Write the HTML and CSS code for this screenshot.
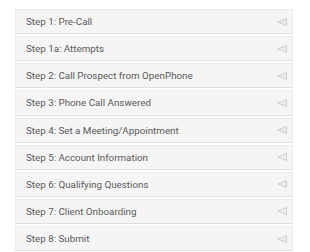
FILE: index.html
```html
<!DOCTYPE html>
<html>
<head>
<meta charset="utf-8">
<link rel="stylesheet" href="styles.css">
</head>
<body>
<div class="steps">
  <div class="step"><span class="label">Step 1: Pre-Call</span><svg class="arrow" viewBox="0 0 10 8"><path d="M9.5 0.5 L0.8 4 L9.5 7.5 Z"/></svg></div>
  <div class="step"><span class="label">Step 1a: Attempts</span><svg class="arrow" viewBox="0 0 10 8"><path d="M9.5 0.5 L0.8 4 L9.5 7.5 Z"/></svg></div>
  <div class="step"><span class="label">Step 2: Call Prospect from OpenPhone</span><svg class="arrow" viewBox="0 0 10 8"><path d="M9.5 0.5 L0.8 4 L9.5 7.5 Z"/></svg></div>
  <div class="step"><span class="label">Step 3: Phone Call Answered</span><svg class="arrow" viewBox="0 0 10 8"><path d="M9.5 0.5 L0.8 4 L9.5 7.5 Z"/></svg></div>
  <div class="step"><span class="label">Step 4: Set a Meeting/Appointment</span><svg class="arrow" viewBox="0 0 10 8"><path d="M9.5 0.5 L0.8 4 L9.5 7.5 Z"/></svg></div>
  <div class="step"><span class="label">Step 5: Account Information</span><svg class="arrow" viewBox="0 0 10 8"><path d="M9.5 0.5 L0.8 4 L9.5 7.5 Z"/></svg></div>
  <div class="step"><span class="label">Step 6: Qualifying Questions</span><svg class="arrow" viewBox="0 0 10 8"><path d="M9.5 0.5 L0.8 4 L9.5 7.5 Z"/></svg></div>
  <div class="step"><span class="label">Step 7: Client Onboarding</span><svg class="arrow" viewBox="0 0 10 8"><path d="M9.5 0.5 L0.8 4 L9.5 7.5 Z"/></svg></div>
  <div class="step"><span class="label">Step 8: Submit</span><svg class="arrow" viewBox="0 0 10 8"><path d="M9.5 0.5 L0.8 4 L9.5 7.5 Z"/></svg></div>
</div>
</body>
</html>
```
FILE: styles.css
```css
html, body {
  margin: 0;
  padding: 0;
  background: #ffffff;
}
body {
  font-family: Roboto, "Liberation Sans", sans-serif;
}
.steps {
  width: 278px;
  margin: 9px 0 0 15px;
  display: flex;
  flex-direction: column;
  gap: 2px;
}
.step {
  box-sizing: border-box;
  height: 25.125px;
  background: #f5f5f5;
  border: 1px solid #ececec;
  border-bottom-color: #e0e0e0;
  display: flex;
  align-items: center;
  justify-content: space-between;
  padding: 0 5px 0 10px;
}
.label {
  font-size: 9.8px;
  color: #5a5a5a;
}
.arrow {
  width: 10px;
  height: 8px;
  fill: #ebebeb;
  stroke: #c8c8c8;
  stroke-width: 0.8;
}
```
